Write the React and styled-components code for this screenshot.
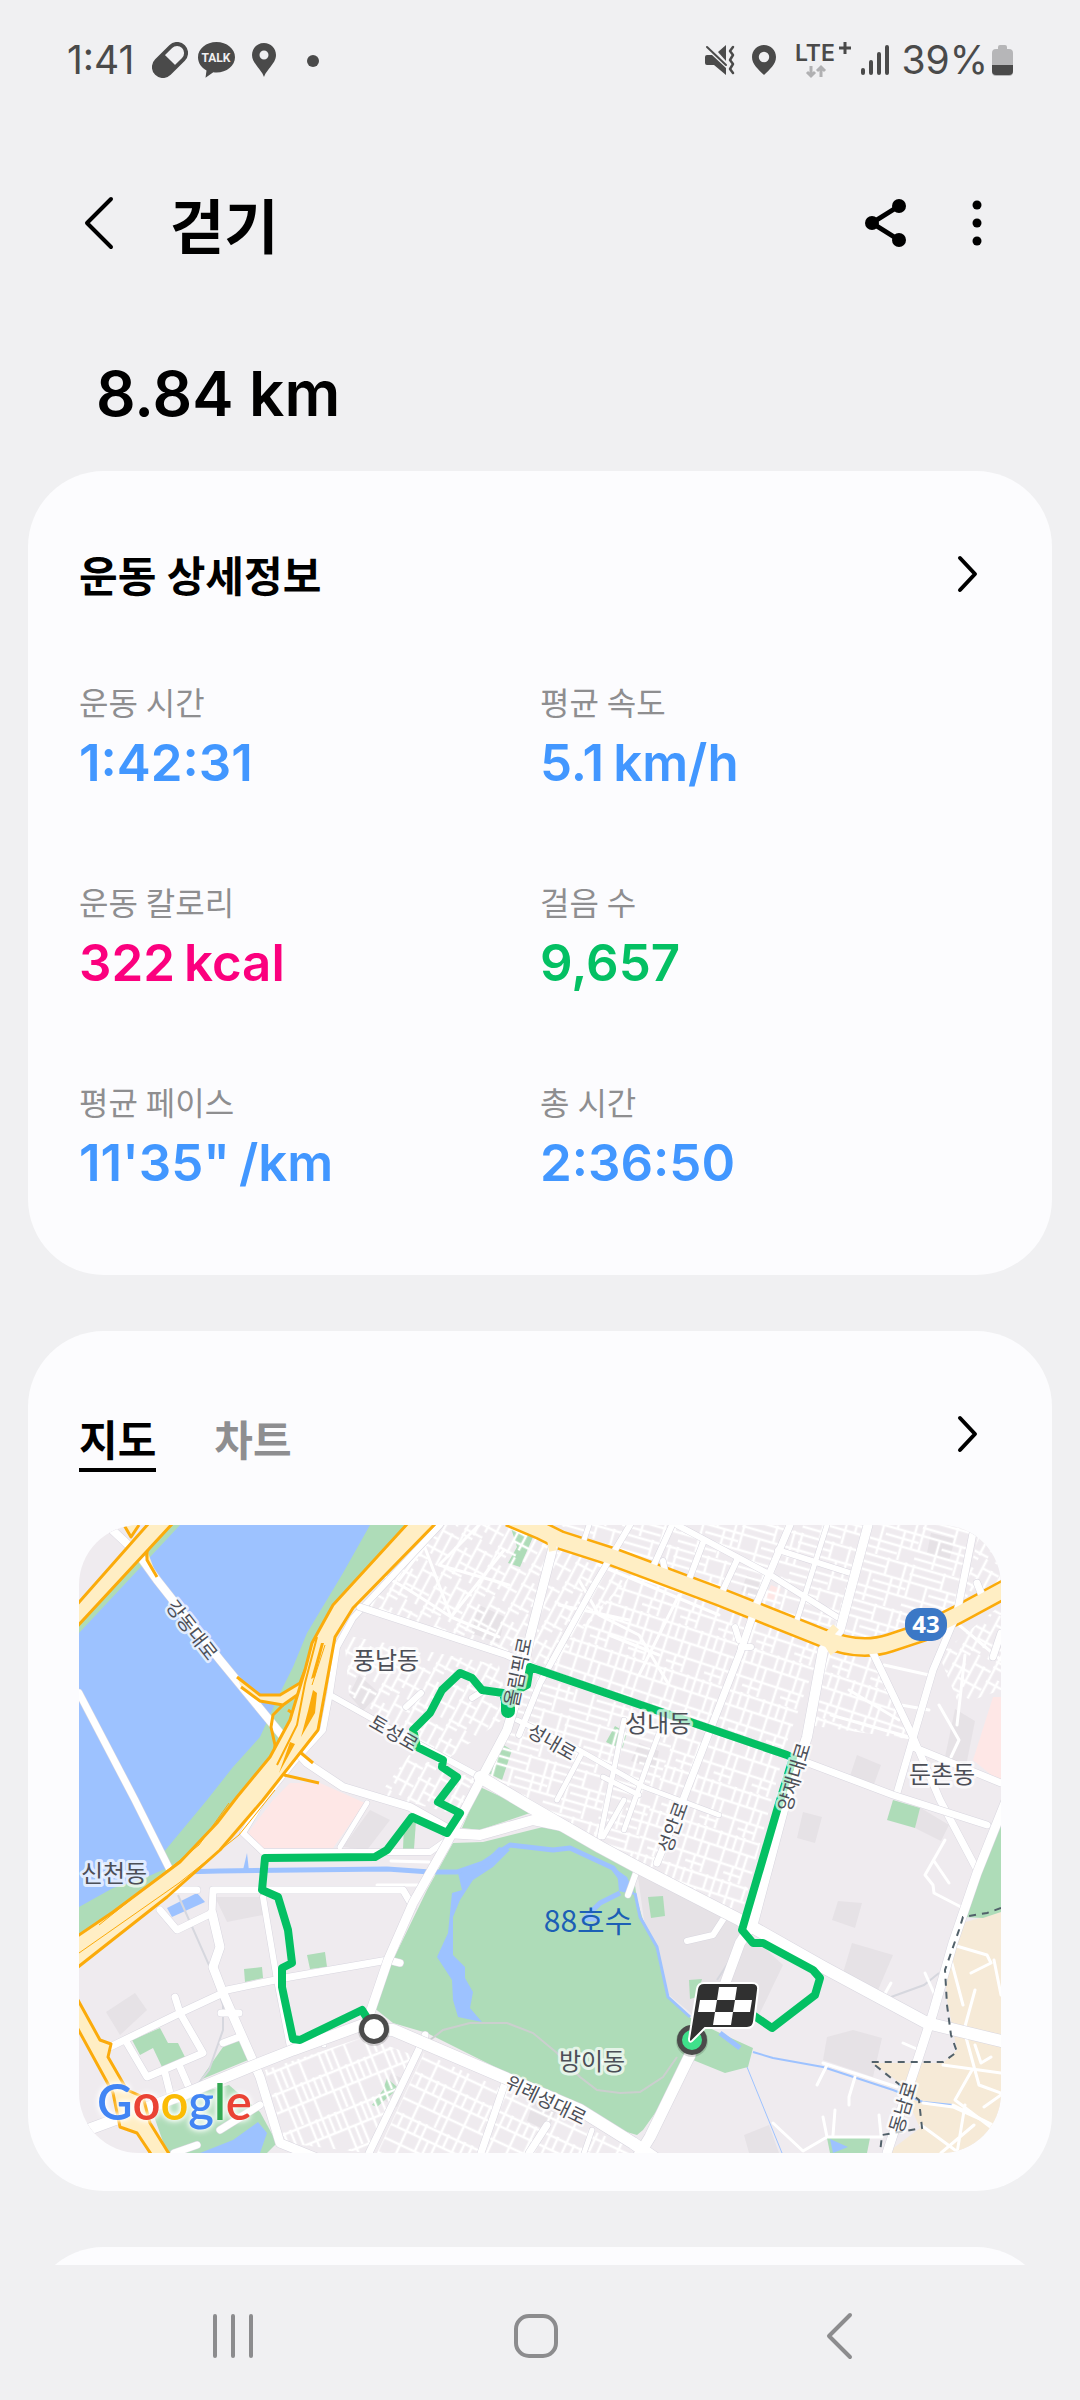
import React, { useState } from 'react';
import styled, { createGlobalStyle } from 'styled-components';


const GlobalStyle = createGlobalStyle`
    * {
        box-sizing: border-box;
    }

    body {
        margin: 0;
        background: #f0f0f2;
        color: #000;
        font-family: Roboto, "Noto Sans CJK KR", sans-serif;
    }

    button {
        margin: 0;
        padding: 0;
        border: 0;
        background: none;
        color: inherit;
        font: inherit;
        cursor: pointer;
    }

    svg {
        display: block;
    }
`


const stats = [
    {name: '운동 시간', val: '1:42:31', color: '#4297ff'},
    {name: '평균 속도', val: '5.1', unit: 'km/h', color: '#4297ff'},
    {name: '운동 칼로리', val: '322', unit: 'kcal', color: '#fb007e'},
    {name: '걸음 수', val: '9,657', color: '#04c063'},
    {name: '평균 페이스', val: '11\'35"', unit: '/km', color: '#4297ff'},
    {name: '총 시간', val: '2:36:50', color: '#4297ff'},
]

const tabs = ['지도', '차트'];


const Screen = styled.div`
    height: 100vh;
    display: flex;
    flex-direction: column;
`

const Main = styled.main`
    flex: 1;
    min-height: 0;
    overflow: hidden;
`


/* status bar */

const Status = styled.div`
    padding: 40px 67px 0 67px;
    height: 80px;
    display: flex;
    justify-content: space-between;
    align-items: center;
    color: #4a4a4a;
    font-family: Inter, sans-serif;
    font-size: 39px;
    font-weight: 400;
    line-height: 40px;
`

const StatusGroup = styled.div`
    display: flex;
    align-items: center;
    gap: ${props => props.$gap}px;
`

const Clock = styled.span`
    margin-right: 8px;
`

const StatusBar = () => {
    return (
        <Status>
            <StatusGroup $gap={10}>
                <Clock>1:41</Clock>
                <PillIcon />
                <TalkIcon />
                <PinIcon />
                <svg width="40" height="36" viewBox="0 0 40 36">
                    <circle cx="20" cy="19" r="6" fill="#4a4a4a" />
                </svg>
            </StatusGroup>
            <StatusGroup $gap={9}>
                <MuteIcon />
                <LocationIcon />
                <LteIcon />
                <SignalIcon />
                <StatusGroup $gap={4}>
                    <span>39%</span>
                    <BatteryIcon />
                </StatusGroup>
            </StatusGroup>
        </Status>
    );
}

const PillIcon = () => (
    <svg width="36" height="36" viewBox="0 0 36 36">
        <g transform="rotate(45 18 18)">
            <rect x="9" y="-1" width="18" height="38" rx="9" fill="none" stroke="#4a4a4a" strokeWidth="4" />
            <path d="M9 18h18v10a9 9 0 0 1-18 0z" fill="#4a4a4a" />
        </g>
    </svg>
)

const TalkIcon = () => (
    <svg width="37" height="36" viewBox="0 0 37 36">
        <path d="M18.500 0C28.700 0 37 6.700 37 15.200S28.700 30.400 18.500 30.400c-1 0-2.200-.1-3.200-.2L7.500 35.800l1-7.400C3.400 25.700 0 20.800 0 15.200 0 6.700 8.300 0 18.500 0z" fill="#4a4a4a" />
        <text x="18" y="20" textAnchor="middle" fontFamily="Roboto, sans-serif" fontSize="12" fontWeight="700" fill="#f0f0f2">TALK</text>
    </svg>
)

const PinIcon = () => (
    <svg width="38" height="36" viewBox="0 0 38 36">
        <path fillRule="evenodd" d="M19 1c6.800 0 12 5.200 12 12 0 5-3 8.500-6 12.500-3.500 4.500-5 6.500-6 9.500-1-3-2.500-5-6-9.500C10 21.500 7 18 7 13 7 6.200 12.200 1 19 1zm0 7.500a4.500 4.500 0 1 0 0 9 4.500 4.500 0 0 0 0-9z" fill="#4a4a4a" />
    </svg>
)

const LocationIcon = () => (
    <svg width="40" height="30" viewBox="0 0 40 30">
        <path fillRule="evenodd" d="M20 0c6.800 0 12 5.200 12 12 0 7.500-6.500 12.500-12 18C14.500 24.500 8 19.500 8 12 8 5.200 13.200 0 20 0zm0 6.800a5.200 5.200 0 1 0 0 10.400 5.200 5.200 0 0 0 0-10.400z" fill="#4a4a4a" />
    </svg>
)

const MuteIcon = () => (
    <svg width="30" height="30" viewBox="0 0 30 30" fill="#4a4a4a">
        <path d="M0 12q0-2 2-2h5L21 23v7L9 20H2q-2 0-2-2z" />
        <path d="M21 0v16l-8-9z" />
        <path d="M2 2l19 18" stroke="#4a4a4a" strokeWidth="2" strokeLinecap="round" />
        <path d="M28 2l-3 4 3 4-3 5 3 4-3 5 3 4" fill="none" stroke="#4a4a4a" strokeWidth="2.500" strokeLinecap="round" strokeLinejoin="round" />
    </svg>
)

const LteIcon = () => (
    <svg width="58" height="50" viewBox="0 -6 58 50">
        <text x="2" y="20" fontFamily="Inter, sans-serif" fontSize="23" fontWeight="600" fill="#4a4a4a">LTE</text>
        <path d="M46 7h12M52 1v12" stroke="#4a4a4a" strokeWidth="3" />
        <path d="M18 25v10M14 31l4 4 4-4M28 36V26M24 30l4-4 4 4" fill="none" stroke="#b0b0b2" strokeWidth="3" />
    </svg>
)

const SignalIcon = () => (
    <svg width="32" height="30" viewBox="0 0 32 30">
        <path d="M3 25v3M11 17v11M19 9v19M27 2v26" stroke="#4a4a4a" strokeWidth="4" strokeLinecap="round" />
    </svg>
)

const BatteryIcon = () => (
    <svg width="21" height="32" viewBox="0 0 21 32">
        <path d="M6 3q0-2 2-2h5q2 0 2 2v2h2q4 0 4 4v19q0 4-4 4H4q-4 0-4-4V9q0-4 4-4h2z" fill="#b6b6b8" />
        <path d="M0 21h21v6q0 4-4 4H4q-4 0-4-4z" fill="#4a4a4a" />
    </svg>
)


/* header */

const Header = styled.header`
    margin-top: 103px;
    padding: 0 46px 0 80px;
    display: flex;
    align-items: center;
`

const Title = styled.h1`
    flex: 1;
    margin: 0 0 0 52px;
    padding-top: 12px;
    font-size: 59px;
    font-weight: 700;
    line-height: 68px;
`

const IconButton = styled.button`
    display: flex;
    justify-content: center;
    width: ${props => props.$width}px;
`

const Distance = styled.p`
    margin: 91px 96px 37px 96px;
    font-family: Inter, sans-serif;
    font-size: 62px;
    font-weight: 600;
    line-height: 80px;
`


/* cards */

const Card = styled.section`
    margin: 0 28px 56px 28px;
    padding: 76px 51px ${props => props.$bottom}px 51px;
    min-height: 240px;
    border-radius: 76px;
    background: #fcfcfe;
`

const CardHead = styled.div`
    display: flex;
    justify-content: space-between;
    align-items: flex-start;
    padding-right: 20px;
`

const CardTitle = styled.h2`
    margin: 0;
    padding-top: 2px;
    font-size: 42px;
    font-weight: 700;
    line-height: 58px;
`

const MoreButton = styled.button`
    padding: 8px 0;
`

const More = (props) => {
    return (
        <MoreButton aria-label={props.label}>
            <svg width="28" height="40" viewBox="0 0 28 40">
                <path d="M7 3l15 16L7 35" fill="none" stroke="#000" strokeWidth="4" strokeLinecap="round" strokeLinejoin="round" />
            </svg>
        </MoreButton>
    );
}

const StatGrid = styled.dl`
    margin: 75px 0 0 0;
    display: grid;
    grid-template-columns: 1fr 1fr;
    row-gap: 86px;
`

const StatName = styled.dt`
    color: #8e8e90;
    font-size: 32px;
    line-height: 44px;
`

const StatVal = styled.dd`
    display: flex;
    gap: 9px;
    margin: 5px 0 1px 0;
    color: ${props => props.$color};
    font-family: Inter, sans-serif;
    font-size: 51px;
    font-weight: 600;
    line-height: 64px;
`

const Stat = (props) => {
    return (
        <div>
            <StatName>{props.name}</StatName>
            <StatVal $color={props.color}>
                <span>{props.val}</span>
                {props.unit && <span>{props.unit}</span>}
            </StatVal>
        </div>
    );
}

const Tabs = styled.div`
    display: flex;
    gap: 58px;
`

const Tab = styled.button`
    padding-top: 8px;
    border-bottom: 4px solid ${props => props.$on ? '#000' : 'transparent'};
    color: ${props => props.$on ? '#000' : '#8e8e90'};
    font-size: 42px;
    font-weight: 700;
    line-height: 53px;
`


/* map */

const MapFrame = styled.div`
    margin-top: 53px;
    border-radius: 60px;
    overflow: hidden;

    svg {
        width: 100%;
        height: auto;
    }
`

const parks = [
    '0,96 88,0 330,0 254,80 233,118 211,195 191,232 138,298 101,337 34,387 0,412',
    '374,318 404,317 464,302 478,303 554,345 558,375 564,395 578,422 589,472 614,495 641,508 674,523 669,542 646,548 614,535 564,605 558,610 541,605 461,562 428,548 348,508 314,498 294,482 314,435 348,365',
    '401,262 429,275 451,288 401,305 383,303',
    '165,444 183,442 184,453 166,457',
    '228,430 246,427 248,442 231,444',
    '53,515 81,503 89,518 99,518 106,532 83,542 74,523 61,530',
    '144,522 161,515 169,535 121,555',
    '71,580 150,560 181,587 198,618 188,628 88,628',
    '308,553 318,562 314,568 308,573 298,582 293,580 304,565',
    '431,0 454,12 441,42 429,38 438,22',
    '421,218 433,225 423,255 409,248',
    '536,201 548,208 543,225 527,217',
    '814,275 841,283 836,303 808,295',
    '922,288 922,387 904,393 884,392',
    '569,372 584,371 586,391 572,393',
    '610,455 623,454 618,472 611,474',
    '748,613 791,613 788,628 751,628',
    '325,300 337,296 335,324 324,324',
]

const waters = [
    '0,108 101,0 291,0 264,48 228,108 214,142 201,168 181,212 154,242 128,275 84,328 88,343 61,355 34,363 0,382',
    '379,348 383,365 373,368 369,408 358,432 373,455 374,475 379,492 403,497 391,483 394,467 386,453 386,442 374,430 374,392 381,375 394,355 414,342 431,325 420,322 404,338',
    '88,383 118,368 126,377 93,392',
    '179,597 188,608 181,628 121,628 154,615',
    '751,614 769,622 754,628',
    '164,345 168,328 170,346',
    '538,345 548,352 556,370 540,366',
]

const blocks = [
    '724,287 743,292 736,318 718,313',
    '759,376 783,378 776,403 753,395',
    '773,418 814,430 796,472 764,448',
    '748,512 774,505 803,513 794,552 744,535',
    '558,345 661,400 704,440 680,490 620,495 590,470 565,395',
    '136,372 181,372 184,390 148,397',
    '56,468 68,485 41,510 27,487',
    '291,285 311,295 288,325 264,322',
    '852,8 876,14 870,36 848,28',
    '876,184 896,196 886,246 866,232',
    '665,610 690,600 700,628 670,628',
    '400,80 426,92 420,118 392,108',
    '280,150 300,168 284,186 270,170',
    '668,50 684,56 676,72 662,66',
    '778,230 802,240 794,262 770,254',
    '840,282 870,300 862,316 836,303',
    '560,218 580,226 576,244 552,236',
    '312,548 328,556 318,582 302,574',
    '455,575 478,585 468,606 448,596',
]

/* each area of small streets gets a line pattern turned to the local grid */
const streetAreas = [
    {fill: 'url(#streetsA)', points: '366,0 448,0 560,42 470,145 281,84 300,60'},
    {fill: 'url(#streetsB)', points: '560,42 744,118 704,228 460,145'},
    {fill: 'url(#streetsC)', points: '480,0 895,0 878,88 781,115 744,105'},
    {fill: 'url(#streetsB)', points: '750,128 800,130 836,215 728,200'},
    {fill: 'url(#streetsA)', points: '860,130 922,80 922,165 880,180'},
    {fill: 'url(#streetsB)', points: '600,198 704,232 661,395 552,338'},
    {fill: 'url(#streetsC)', points: '455,150 600,198 552,338 400,252'},
    {fill: 'url(#streetsA)', points: '265,110 420,140 430,190 360,240 340,215 270,170'},
    {fill: 'url(#streetsA)', points: '330,230 400,255 380,290 300,270'},
    {fill: 'url(#streetsD)', points: '186,545 285,512 334,530 288,628 206,618'},
    {fill: 'url(#streetsE)', points: '345,528 550,622 550,628 298,628'},
    {fill: 'url(#streetsA)', points: '900,8 922,30 922,60 884,74'},
]

const lanes = [
    'M361 0L320 55M300 48L330 65L372 92M345 20L372 92L420 112M372 92L425 25M400 0L360 40L430 60',
    'M500 55L520 90L560 110L590 160M480 80L550 95M520 40L640 90M600 70L560 150M530 110L580 130',
    'M874 420L908 430L912 438L892 448M872 435L884 480M915 435L922 470M896 465L885 505L900 560L922 568',
    'M864 540L922 548M893 545L876 575L922 610M886 580L878 628M895 600L862 628M905 582L922 570',
    'M896 520L902 538L912 532M842 600L880 628M874 580L914 600L910 612',
    'M866 315L846 350L854 360L855 368L882 382M855 336L870 358M846 448L858 475M812 458L804 472',
    'M748 540L738 560M776 552L770 572L770 580M694 598L724 626L748 612L803 612M744 592L748 612M756 585L754 610M800 590L802 610',
    'M824 518L840 525M744 538L818 562M844 578L874 582L905 596',
    'M312 336L350 337M298 360L344 360M880 100L922 135M860 180L880 215L872 232M886 130L878 200',
    'M805 140L850 150M822 180L850 185M770 165L820 195M752 190L830 212',
]

const minorRoads = [
    {d: 'M361 0L274 93L258 122L251 168L244 205L214 238L184 275L164 308L184 327H351L368 315', w: 6},
    {d: 'M288 278L261 322', w: 5},
    {d: 'M551 0L514 62L461 158L440 210', w: 6},
    {d: 'M593 0L574 42M624 18L611 52M658 35L644 65M584 36L586 46', w: 6},
    {d: 'M711 0L678 78L661 128L604 275L578 338', w: 7},
    {d: 'M748 0L718 95M510 0L504 18', w: 5},
    {d: 'M598 0L688 48L758 92M699 25L771 48', w: 6},
    {d: 'M894 8L878 88L854 145L818 268', w: 7},
    {d: 'M794 128L834 212L861 275L898 345', w: 7},
    {d: 'M834 222L922 258M922 108L914 132M898 58L902 68', w: 7},
    {d: 'M251 170L301 198L401 252', w: 6},
    {d: 'M438 195L500 225L565 262L640 290M503 228L478 275M545 195L521 312M585 195L570 235L545 305', w: 5},
    {d: 'M524 252L560 270M524 312L545 275', w: 5},
    {d: 'M134 365H324L334 382M134 365L133 388L98 405L81 385M91 365H118', w: 7},
    {d: 'M133 388L141 422L134 442L144 468L181 552L201 618L280 650', w: 9},
    {d: 'M184 372L198 455L211 522', w: 6},
    {d: 'M321 438L309 435L211 452L148 465', w: 7},
    {d: 'M144 468L101 488L31 522M96 472L101 488L124 528L68 552L48 518M101 542L111 565M86 548L92 572M142 488L160 488M144 518L160 512', w: 7},
    {d: 'M141 605L181 580M95 628L118 620', w: 7},
    {d: 'M342 520L290 628M428 552L402 628M468 600L450 628M345 515L346 510', w: 7},
    {d: 'M647 390L634 410L608 416', w: 6},
    {d: 'M558 345L549 370', w: 6},
    {d: 'M513 605L505 628M245 520V514', w: 5},
    {d: 'M327 182L342 168M393 173L404 166M660 115L656 102M662 122H672', w: 6},
]

const majorRoads = [
    {d: 'M281 82L428 130L461 145L708 230L814 270L908 300', w: 7},
    {d: 'M474 22L451 112L441 162L428 205L391 275L368 318L334 378L309 435L291 488', w: 9},
    {d: 'M401 252L448 280L521 322L558 342L661 395L744 442L848 498L922 516', w: 12},
    {d: 'M368 308L401 310L454 295L488 302', w: 10},
    {d: 'M294 504L314 505L501 585L554 618L600 650', w: 12},
    {d: 'M294 496L214 525L171 542L108 568L8 605', w: 11},
    {d: 'M611 530L571 612L560 630', w: 11},
    {d: 'M744 125L728 212L704 285L674 398L661 418L640 475', w: 10},
    {d: 'M789 0L761 105L744 125', w: 9},
    {d: 'M930 268L898 348L874 418L854 488L841 528L808 628', w: 9},
    {d: 'M28 0L60 30L78 55L141 135L201 208L228 238L264 262L331 282L368 303', w: 8},
    {d: 'M0 168L56 275L91 345', w: 7},
]

const routePath = 'M295 504L283 485L221 515L214 514L203 462V443L213 438L209 405L199 372L183 365L186 333L296 332L308 325L333 292L368 308L381 288L359 277L378 252L363 242L364 235L338 222L334 205L351 188L363 165L381 148L393 153L403 165L424 168L429 188L433 168L448 160L451 142L708 230L714 233L699 282L663 405L674 418H684L734 445L741 453L736 470L693 503L674 490';

const places = [
    {name: '풍납동', x: 307, y: 144, size: 24},
    {name: '성내동', x: 579, y: 207, size: 24},
    {name: '둔촌동', x: 863, y: 258, size: 24},
    {name: '신천동', x: 35, y: 357, size: 24},
    {name: '방이동', x: 513, y: 545, size: 24},
    {name: '강동대로', x: 113, y: 105, size: 19, turn: 52},
    {name: '토성로', x: 315, y: 208, size: 19, turn: 30},
    {name: '성내로', x: 473, y: 217, size: 19, turn: 30},
    {name: '올림픽로', x: 439, y: 147, size: 19, turn: -78},
    {name: '양재대로', x: 715, y: 252, size: 19, turn: -73},
    {name: '성안로', x: 594, y: 302, size: 19, turn: -70},
    {name: '위례성대로', x: 467, y: 575, size: 19, turn: 26},
    {name: '동남로', x: 824, y: 582, size: 19, turn: -73},
]

const PlaceName = styled.text`
    font-family: "Noto Sans CJK KR", sans-serif;
    font-size: ${props => props.$size}px;
    font-weight: 400;
    fill: ${props => props.$color || '#4c4f57'};
    text-anchor: middle;
    paint-order: stroke;
    stroke: rgba(255, 255, 255, 0.7);
    stroke-width: ${props => props.$halo}px;
    stroke-linejoin: round;
`

const Roads = (props) => {
    return (
        <g fill="none" strokeLinejoin="round" strokeLinecap="round">
            {props.roads.map((r) => <path key={r.d} d={r.d} stroke="#d8d6df" strokeWidth={r.w + 1} />)}
            {props.roads.map((r) => <path key={r.d} d={r.d} stroke="#fff" strokeWidth={r.w} />)}
        </g>
    );
}

const Streets = (props) => {
    return (
        <pattern id={props.id} width={props.w} height={props.h} patternUnits="userSpaceOnUse" patternTransform={'rotate(' + props.turn + ')'}>
            <path d={props.d} fill="none" stroke="#fff" strokeWidth="2.500" />
        </pattern>
    );
}

const Polygons = (props) => {
    return (
        <g fill={props.fill}>
            {props.items.map((p) => <polygon key={p} points={p} />)}
        </g>
    );
}

const highwayEast = 'M430 -8L461 5L481 15L534 32L641 72L744 113Q781 128 811 118L844 107L878 90L930 62';

const RouteMap = () => {
    return (
        <svg viewBox="0 0 922 628" role="img" aria-label="운동 경로 지도">
            <defs>
                <Streets id="streetsA" w={44} h={38} turn={-62} d="M0 2H44M0 11H30M8 20H44M0 30H36M2 0V20M14 10V38M24 0V19M34 19V38M40 0V12" />
                <Streets id="streetsB" w={40} h={46} turn={18} d="M0 2H40M0 16H40M0 31H40M2 0V16M10 0V31M18 16V46M26 0V16M34 0V46M8 31V46M0 39H18" />
                <Streets id="streetsC" w={58} h={48} turn={16} d="M0 2H58M0 10H34M0 18H58M24 26H58M0 34H58M0 42H40M2 0V33M20 17V48M34 0V17M42 17V48M52 0V33" />
                <Streets id="streetsD" w={48} h={40} turn={-22} d="M0 2H48M0 20H48M3 0V40M10 0V20M17 0V20M24 0V40M31 20V40M38 0V40M45 0V20" />
                <Streets id="streetsE" w={50} h={44} turn={25} d="M0 2H50M0 15H50M0 30H50M3 0V44M11 0V15M19 0V30M27 15V44M35 0V44M43 0V15" />
            </defs>

            <rect width="922" height="628" fill="#efebef" />
            <Polygons fill="#e6e2e6" items={blocks} />
            <Polygons fill="#fee7e6" items={[
                '211,258 241,258 286,278 254,323 184,323 169,308 194,275',
                '914,172 922,172 922,258 894,235',
                '692,60 702,64 696,78 686,74',
            ]} />
            <polygon fill="#f6ead7" points="883,398 922,387 922,628 808,628 841,603 821,558 794,538 864,538 878,525 868,475 866,445" />
            <Polygons fill="#aedcb8" items={parks} />
            <Polygons fill="#9dc2ff" items={waters} />

            <g fill="none" stroke="#9dc2ff" strokeLinejoin="round">
                <path d="M101 347L140 346L308 344L351 347L378 347L404 338L431 320L474 325L491 323L534 343L550 364" strokeWidth="5" />
                <path d="M556 368L561 392L578 422L589 472L611 492" strokeWidth="3" />
                <path d="M641 508L661 523M541 368L521 378L505 394H521" strokeWidth="5" />
                <path d="M674 527L694 533L744 542L814 565L844 577L874 580" strokeWidth="2" />
                <path d="M668 542L703 628" strokeWidth="1" />
            </g>
            <path d="M351 515L364 505L391 498H428L454 508L478 528L501 552L518 565L541 568L561 567L584 552L598 532" fill="none" stroke="#cbcfce" strokeWidth="2" />
            <path d="M99 370L130 440L144 480V505L130 545L118 560M653 432L638 455M812 472L845 460L860 448" fill="none" stroke="#d6d7de" strokeWidth="2" />

            {streetAreas.map((a) => <polygon key={a.points} points={a.points} fill={a.fill} />)}
            <g fill="none" stroke="#fff" strokeWidth="3" strokeLinecap="round" strokeLinejoin="round">
                {lanes.map((d) => <path key={d} d={d} />)}
            </g>

            {/* crossing roads cut the edge of the highway, its surface covers them */}
            <path d={highwayEast} fill="none" stroke="#fbab0b" strokeWidth="20" />
            <Roads roads={minorRoads} />
            <Roads roads={majorRoads} />
            <path d={highwayEast} fill="none" stroke="#ffeec4" strokeWidth="15" />
            <path d="M471 8L474 26M757 102L746 114L755 128" fill="none" stroke="#ffeec4" strokeWidth="8" />

            <g stroke="#fbab0b" strokeWidth="3" fill="#ffeec4" strokeLinejoin="round">
                <path d="M158 152L181 170H201L221 158L226 145L221 168L204 180L181 176L162 162M68 25V35L78 52M45 0L52 12L60 0" />
                <path d="M204 180L194 190L192 202L196 220L194 240M209 185L222 194M222 228L234 238M205 250L240 258" fill="none" />
                <path d="M-6 84L70 -2H94L-6 106z" />
                <path d="M330 -3L254 80L233 118L226 145L211 195L191 232L158 272L138 298L101 337L34 387L-6 414V446L88 372L141 325L184 275L239 205L256 112L274 83L358 -3z" />
                <path d="M-6 466L21 515L32 519L29 532L48 565L64 572L71 598L92 632H74L58 608L41 602L34 568L-6 495z" />
            </g>
            <path d="M246 120L233 160M196 265L160 310L100 358L0 428M150 278L120 320L20 400" fill="none" stroke="#fbab0b" strokeWidth="1" />
            <path d="M238 112L226 158L218 200L198 240" fill="none" stroke="#fbab0b" strokeWidth="2" />
            <path d="M245 118L236 152L232 154L242 118zM234 165L238 168L236 188L222 212L229 186zM211 217L216 219L200 248z" fill="#fbab0b" />

            <path d="M922 383L908 388L884 392L880 405L866 445L868 480L872 510L878 527L864 537H792L821 560L840 575L843 603L803 610L801 628" fill="none" stroke="#52616a" strokeWidth="2" strokeDasharray="7 6" />

            <path d={routePath} fill="none" stroke="#04c063" strokeWidth="8" strokeLinejoin="round" strokeLinecap="round" />
            <path d="M429 176V186" stroke="#04c063" strokeWidth="14" strokeLinecap="round" />

            {places.map((p) => (
                <PlaceName
                    key={p.name}
                    $size={p.size}
                    $halo={p.turn ? 5 : 6}
                    x={p.x}
                    y={p.turn ? p.y + 7 : p.y}
                    transform={p.turn ? 'rotate(' + p.turn + ' ' + p.x + ' ' + p.y + ')' : undefined}
                >
                    {p.name}
                </PlaceName>
            ))}
            <PlaceName $size={30} $halo={0} $color="#1c5fb5" x="509" y="407">88호수</PlaceName>

            <rect x="826" y="83" width="42" height="33" rx="15" fill="#3b78c6" />
            <text x="847" y="108" textAnchor="middle" fontFamily="Noto Sans, sans-serif" fontSize="24" fontWeight="700" fill="#fff">43</text>

            <Marker x={295} y={504} fill="#fff" />
            <Marker x={613} y={515} fill="#3fe08b" />
            <Flag />
            <GoogleMark x="18" y="595">
                <tspan fill="#4285f4">G</tspan>
                <tspan fill="#ea4335">o</tspan>
                <tspan fill="#fbbc05">o</tspan>
                <tspan fill="#4285f4">g</tspan>
                <tspan fill="#34a853">l</tspan>
                <tspan fill="#ea4335">e</tspan>
            </GoogleMark>
        </svg>
    );
}

const Marker = (props) => {
    return (
        <g>
            <circle cx={props.x} cy={props.y + 1} r="16" fill="#000" opacity="0.15" />
            <circle cx={props.x} cy={props.y} r="12.500" fill={props.fill} stroke="#4b4b4b" strokeWidth="5" />
        </g>
    );
}

const Flag = () => {
    return (
        <g>
            <path d="M625 458H673Q680 458 679 465L675 497Q674 503 668 503H626L613 516Q610 518 610 514L618 464Q619 458 625 458z" fill="#303030" stroke="#fff" strokeWidth="2" />
            <path d="M640 462H658L656 475H638zM621 475H638L636 487H619zM656 475H673L671 487H654zM636 487H654L652 500H634z" fill="#fff" />
        </g>
    );
}

const GoogleMark = styled.text`
    font-family: Lato, sans-serif;
    font-size: 49px;
    font-weight: 600;
    filter: drop-shadow(0 0 2px #fff) drop-shadow(0 0 3px #fff);
`


/* system navigation */

const NavBar = styled.nav`
    flex: none;
    height: 135px;
    padding: 6px 90px 0 82px;
    display: grid;
    grid-template-columns: 1fr 1fr 1fr;
    align-items: center;
    justify-items: center;

    svg {
        fill: none;
        stroke: #8c8c8e;
        stroke-width: 4;
        stroke-linecap: round;
        stroke-linejoin: round;
    }
`

const SystemNav = () => {
    return (
        <NavBar>
            <button aria-label="최근 앱">
                <svg width="44" height="48" viewBox="0 0 44 48">
                    <path d="M4 4v40M22 4v40M40 4v40" />
                </svg>
            </button>
            <button aria-label="홈">
                <svg width="48" height="48" viewBox="0 0 48 48">
                    <rect x="4" y="4" width="40" height="40" rx="13" />
                </svg>
            </button>
            <button aria-label="뒤로">
                <svg width="30" height="50" viewBox="0 0 30 50">
                    <path d="M26 4L5 25l21 21" />
                </svg>
            </button>
        </NavBar>
    );
}


const App = () => {
    const [tab, setTab] = useState(tabs[0]);

    return (
        <Screen>
            <GlobalStyle />
            <Main>
                <StatusBar />
                <Header>
                    <IconButton $width={38} aria-label="뒤로 가기">
                        <svg width="34" height="56" viewBox="0 0 34 56">
                            <path d="M29 4L5 28l24 24" fill="none" stroke="#000" strokeWidth="4" strokeLinecap="round" strokeLinejoin="round" />
                        </svg>
                    </IconButton>
                    <Title>걷기</Title>
                    <IconButton $width={68} aria-label="공유">
                        <svg width="42" height="48" viewBox="0 0 42 48">
                            <path d="M34 7L7 24l27 17" fill="none" stroke="#000" strokeWidth="5" />
                            <circle cx="34" cy="7" r="7" />
                            <circle cx="7" cy="24" r="7" />
                            <circle cx="34" cy="41" r="7" />
                        </svg>
                    </IconButton>
                    <IconButton $width={114} aria-label="더보기">
                        <svg width="10" height="48" viewBox="0 0 10 48">
                            <circle cx="5" cy="6" r="4.500" />
                            <circle cx="5" cy="24" r="4.500" />
                            <circle cx="5" cy="42" r="4.500" />
                        </svg>
                    </IconButton>
                </Header>
                <Distance>8.84 km</Distance>

                <Card $bottom={79}>
                    <CardHead>
                        <CardTitle>운동 상세정보</CardTitle>
                        <More label="운동 상세정보 보기" />
                    </CardHead>
                    <StatGrid>
                        {stats.map((s) => <Stat key={s.name} {...s} />)}
                    </StatGrid>
                </Card>

                <Card $bottom={38}>
                    <CardHead>
                        <Tabs role="tablist">
                            {tabs.map((t) => (
                                <Tab key={t} role="tab" aria-selected={t === tab} $on={t === tab} onClick={() => setTab(t)}>{t}</Tab>
                            ))}
                        </Tabs>
                        <More label="지도 보기" />
                    </CardHead>
                    <MapFrame>
                        <RouteMap />
                    </MapFrame>
                </Card>

                <Card $bottom={80} />
            </Main>
            <SystemNav />
        </Screen>
    );
}

export default App;
